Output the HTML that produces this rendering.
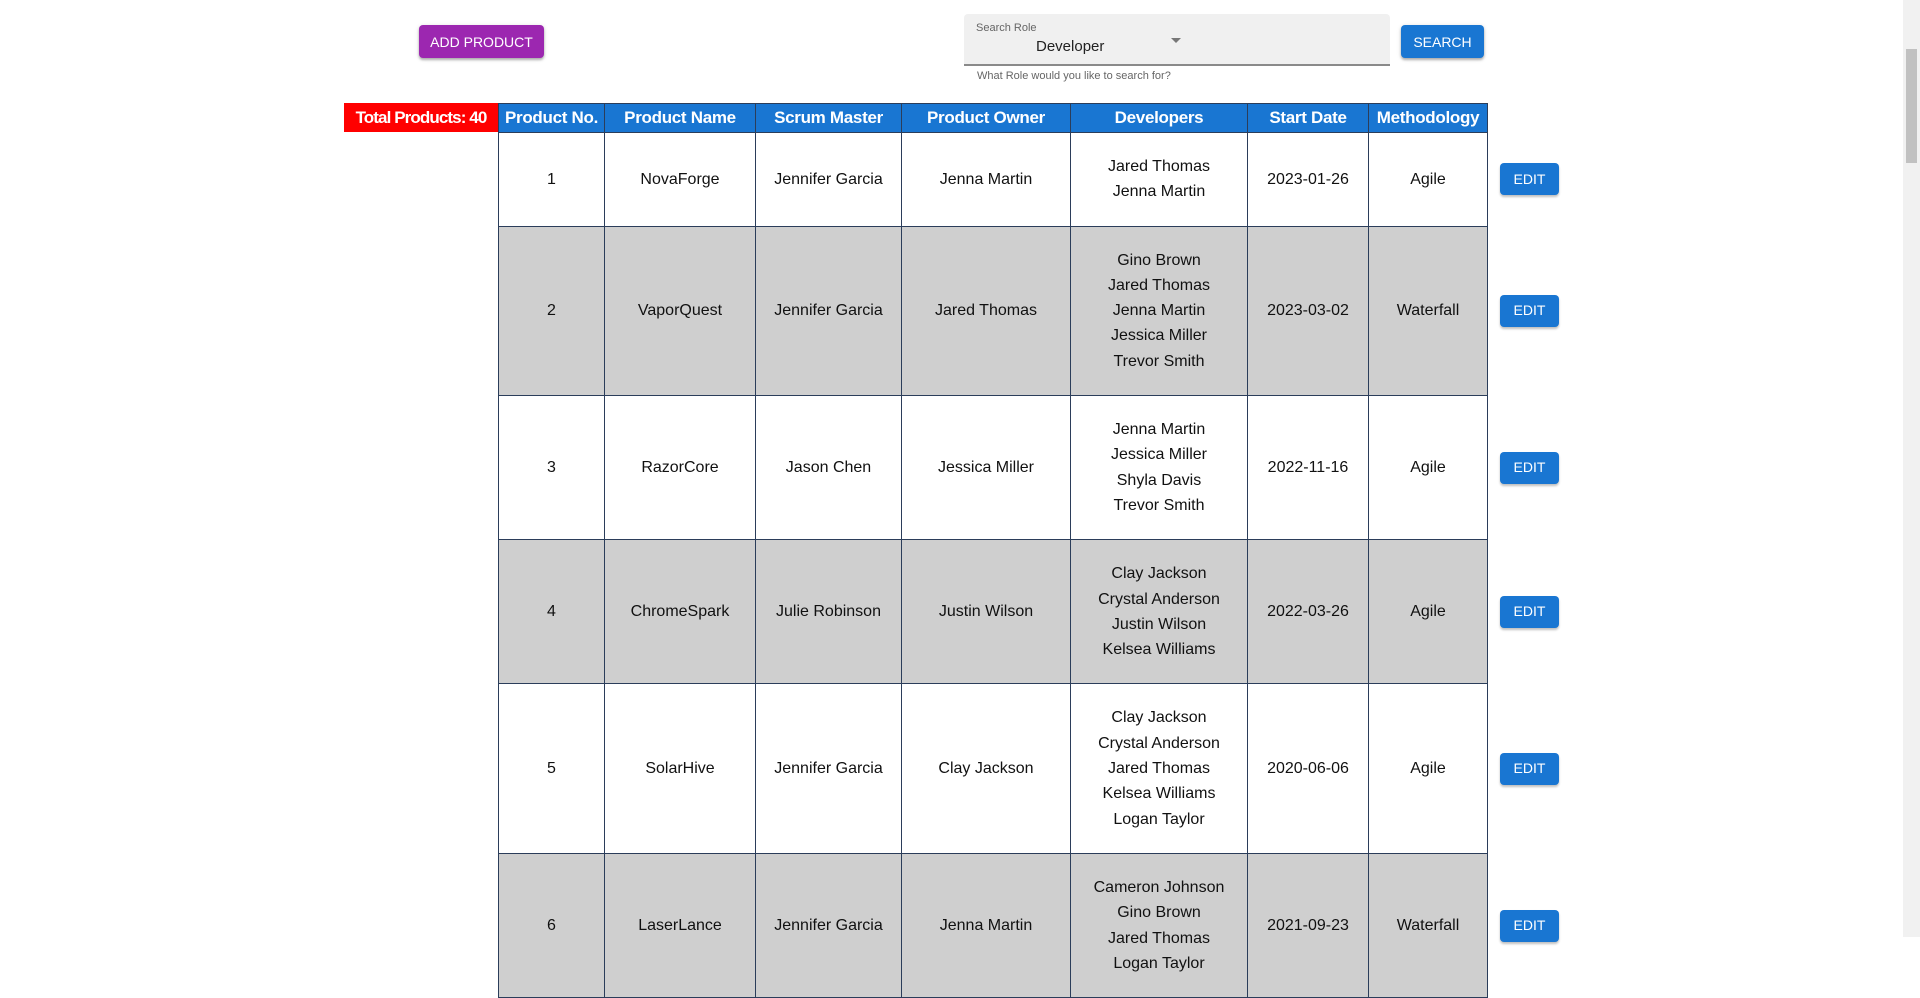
<!DOCTYPE html>
<html><head><meta charset="utf-8"><style>
body{margin:0;width:1920px;height:937px;overflow:hidden;background:#fff;font-family:"Liberation Sans",Arial,sans-serif;position:relative}
.btn{position:absolute;color:#fff;border-radius:4px;font-size:14px;display:flex;align-items:center;justify-content:center;box-shadow:0 2px 2px rgba(0,0,0,.25),0 1px 5px rgba(0,0,0,.15)}
.field{position:absolute;left:964px;top:14px;width:426px;height:50px;background:#f0f0f0;border-bottom:2px solid #8a8a8a;border-radius:4px 4px 0 0}
table{position:absolute;left:498px;top:103px;border-collapse:collapse}
th{background:#1976d2;color:#fff;font-size:17px;font-weight:bold;height:28px;padding:0;border:1px solid #2b3d5a;white-space:nowrap;letter-spacing:-0.3px}
td{font-size:16px;line-height:25.3px;text-align:center;border:1px solid #2b3d5a;padding:21px 0;color:#111}
tr.g td{background:#cfcfcf}
td.e{border:none;background:#fff!important;text-align:left;padding:0}
.eb{display:inline-flex;width:59px;height:32px;margin-left:12px;background:#1976d2;color:#fff;border-radius:4px;font-size:14px;align-items:center;justify-content:center;box-shadow:0 2px 2px rgba(0,0,0,.25)}
</style></head><body>
<div class="btn" style="left:419px;top:25px;width:125px;height:33px;background:#9c27b0">ADD PRODUCT</div>
<div class="field">
<div style="position:absolute;left:12px;top:8px;font-size:11px;color:#666">Search Role</div>
<div style="position:absolute;left:72px;top:24px;font-size:15px;color:#222">Developer</div>
<div style="position:absolute;left:207px;top:24px;width:0;height:0;border-left:5px solid transparent;border-right:5px solid transparent;border-top:5px solid #777"></div>
</div>
<div style="position:absolute;left:977px;top:70px;font-size:11px;color:#666">What Role would you like to search for?</div>
<div class="btn" style="left:1401px;top:25px;width:83px;height:33px;background:#1976d2">SEARCH</div>
<div style="position:absolute;left:344px;top:103px;width:154px;height:29px;background:#f00;color:#fff;font-weight:bold;font-size:17px;letter-spacing:-0.9px;line-height:29px;text-align:center;white-space:nowrap;overflow:hidden">Total Products: 40</div>
<table>
<colgroup><col style="width:106px"><col style="width:151px"><col style="width:146px"><col style="width:169px"><col style="width:177px"><col style="width:121px"><col style="width:119px"><col style="width:80px"></colgroup>
<tr><th>Product No.</th><th>Product Name</th><th>Scrum Master</th><th>Product Owner</th><th>Developers</th><th>Start Date</th><th>Methodology</th><th style="background:#fff;border:none"></th></tr>
<tr><td>1</td><td>NovaForge</td><td>Jennifer Garcia</td><td>Jenna Martin</td><td>Jared Thomas<br>Jenna Martin</td><td>2023-01-26</td><td>Agile</td><td class="e"><span class="eb">EDIT</span></td></tr>
<tr class="g"><td>2</td><td>VaporQuest</td><td>Jennifer Garcia</td><td>Jared Thomas</td><td>Gino Brown<br>Jared Thomas<br>Jenna Martin<br>Jessica Miller<br>Trevor Smith</td><td>2023-03-02</td><td>Waterfall</td><td class="e"><span class="eb">EDIT</span></td></tr>
<tr><td>3</td><td>RazorCore</td><td>Jason Chen</td><td>Jessica Miller</td><td>Jenna Martin<br>Jessica Miller<br>Shyla Davis<br>Trevor Smith</td><td>2022-11-16</td><td>Agile</td><td class="e"><span class="eb">EDIT</span></td></tr>
<tr class="g"><td>4</td><td>ChromeSpark</td><td>Julie Robinson</td><td>Justin Wilson</td><td>Clay Jackson<br>Crystal Anderson<br>Justin Wilson<br>Kelsea Williams</td><td>2022-03-26</td><td>Agile</td><td class="e"><span class="eb">EDIT</span></td></tr>
<tr><td>5</td><td>SolarHive</td><td>Jennifer Garcia</td><td>Clay Jackson</td><td>Clay Jackson<br>Crystal Anderson<br>Jared Thomas<br>Kelsea Williams<br>Logan Taylor</td><td>2020-06-06</td><td>Agile</td><td class="e"><span class="eb">EDIT</span></td></tr>
<tr class="g"><td>6</td><td>LaserLance</td><td>Jennifer Garcia</td><td>Jenna Martin</td><td>Cameron Johnson<br>Gino Brown<br>Jared Thomas<br>Logan Taylor</td><td>2021-09-23</td><td>Waterfall</td><td class="e"><span class="eb">EDIT</span></td></tr>
</table>
<div style="position:absolute;right:0;top:0;width:17px;height:937px;background:#f1f1f1"></div>
<div style="position:absolute;right:3px;top:49px;width:11px;height:114px;background:#c1c1c1"></div>
</body></html>
